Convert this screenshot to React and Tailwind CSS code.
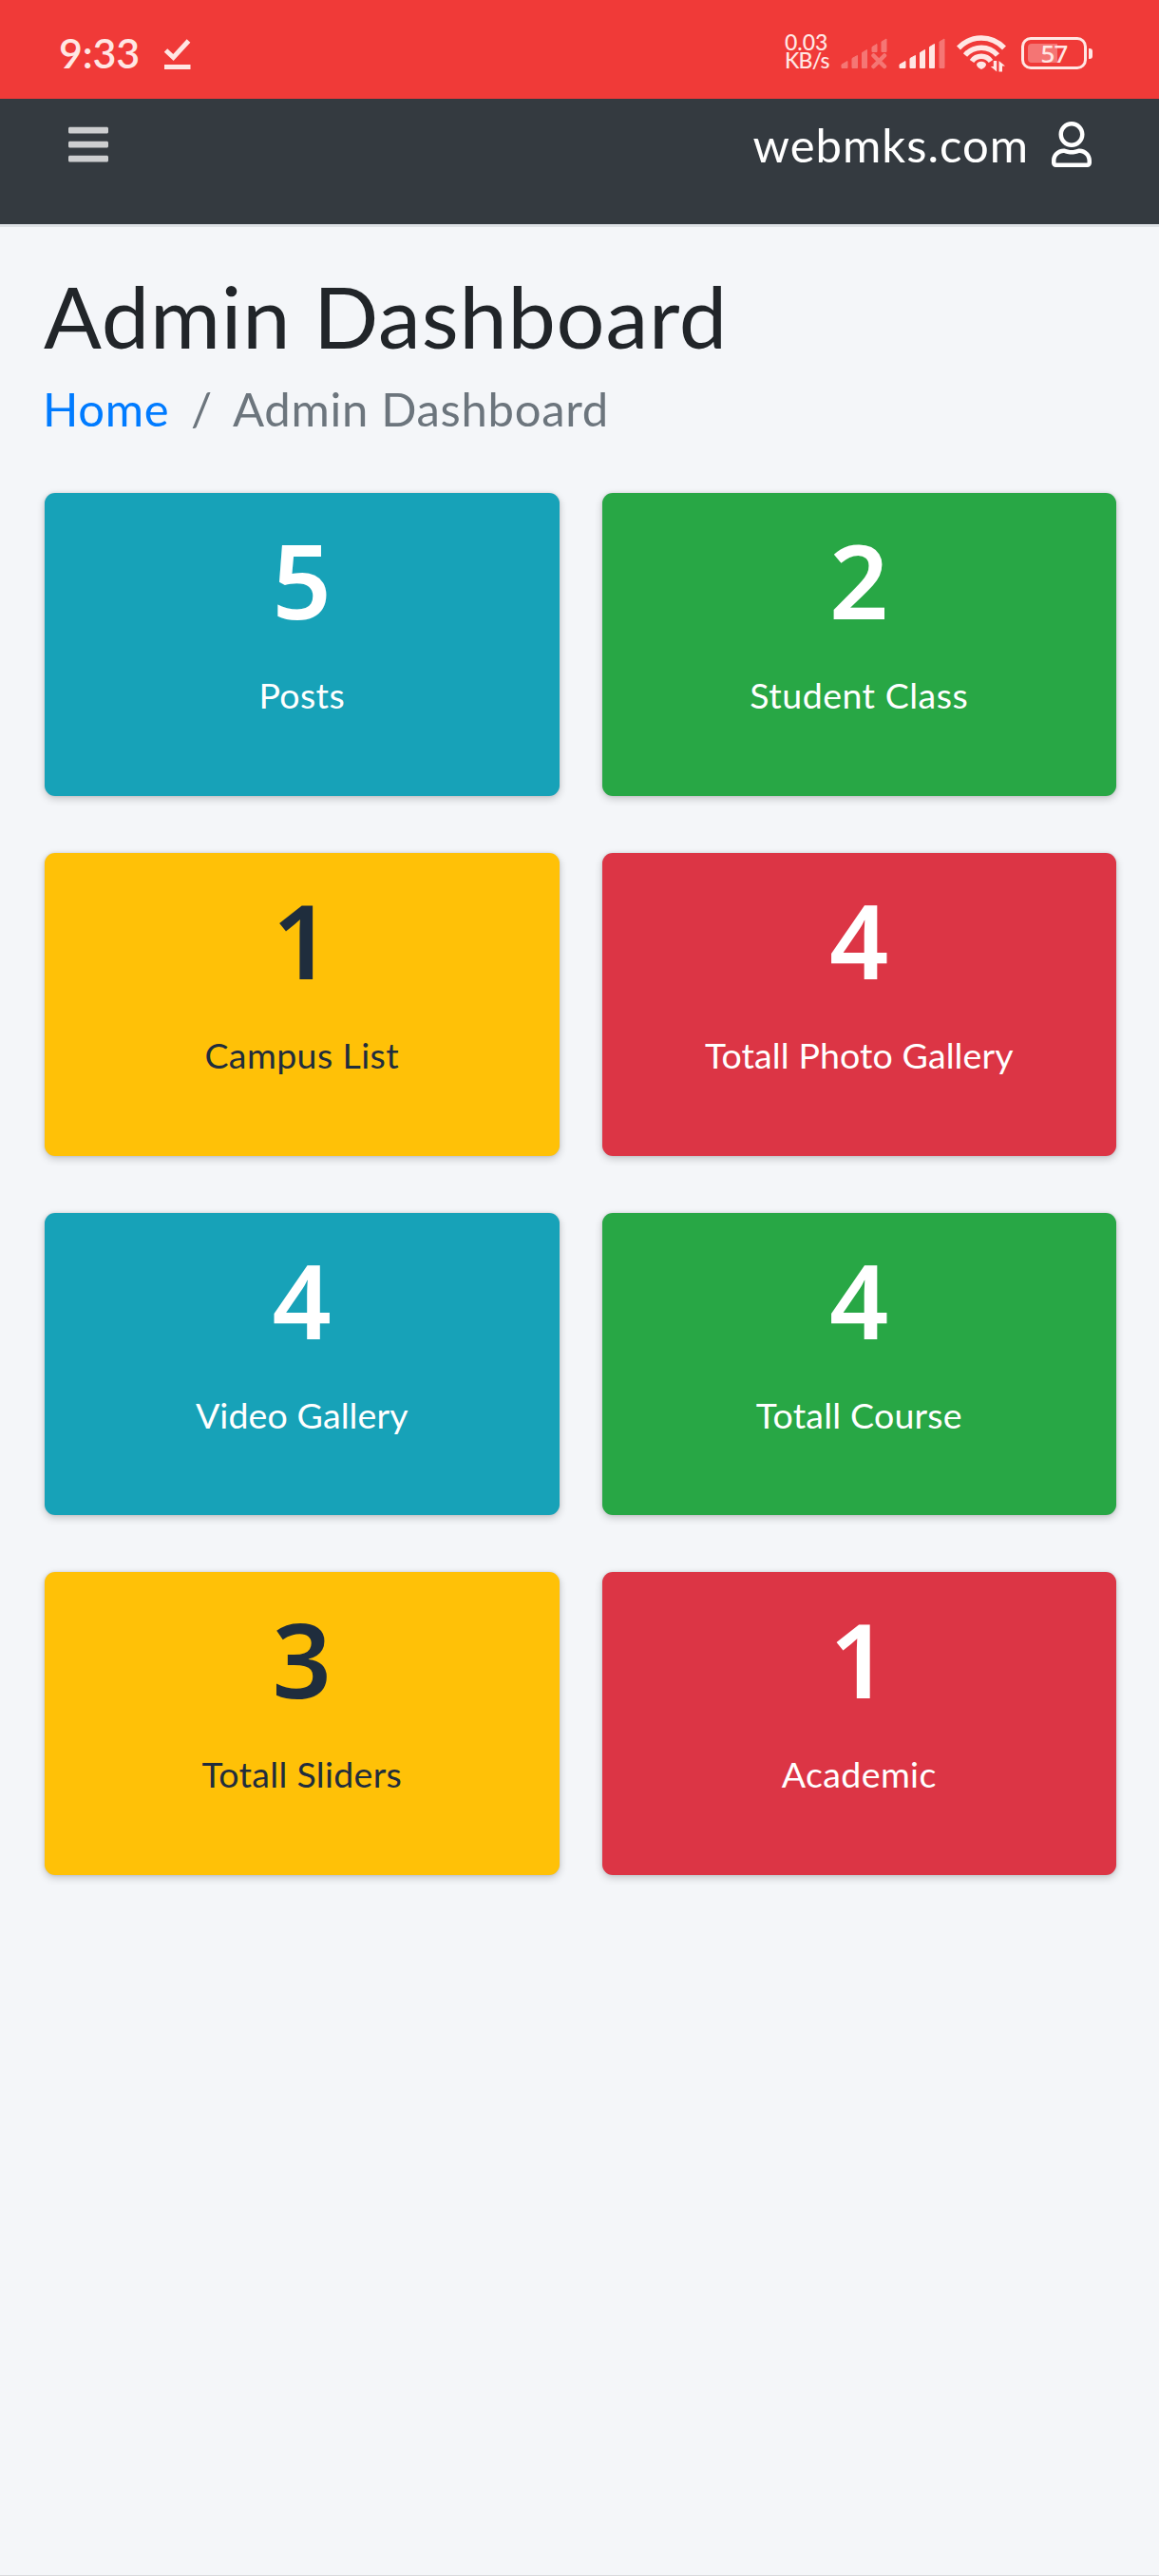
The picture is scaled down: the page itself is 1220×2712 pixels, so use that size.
import { FaBars, FaRegUser } from "react-icons/fa";

const cards = [
  { count: 5, label: "Posts", color: "bg-[#17a2b8] text-white", tracking: "tracking-[0.4px]" },
  { count: 2, label: "Student Class", color: "bg-[#28a745] text-white", tracking: "tracking-[0.5px]" },
  { count: 1, label: "Campus List", color: "bg-[#ffc107] text-[#1f2d3d]", tracking: "tracking-[0.4px]" },
  { count: 4, label: "Totall Photo Gallery", color: "bg-[#dc3545] text-white", tracking: "tracking-[0.1px]" },
  { count: 4, label: "Video Gallery", color: "bg-[#17a2b8] text-white", tracking: "tracking-[0.1px]" },
  { count: 4, label: "Totall Course", color: "bg-[#28a745] text-white", tracking: "tracking-[0.2px]" },
  { count: 3, label: "Totall Sliders", color: "bg-[#ffc107] text-[#1f2d3d]", tracking: "tracking-[0.3px]" },
  { count: 1, label: "Academic", color: "bg-[#dc3545] text-white", tracking: "tracking-[0.4px]" },
];

function DownloadDoneIcon() {
  return (
    <svg width="30" height="34" viewBox="0 0 30 34" fill="none" stroke="currentColor" strokeWidth="5">
      <path d="M2.5 14 L10.5 21.5 L26.5 4" />
      <path d="M1 31.5H28.5" />
    </svg>
  );
}

function NoSignalIcon() {
  return (
    <svg width="50" height="34" viewBox="0 0 50 34" fill="currentColor" stroke="currentColor" strokeWidth="1" strokeLinejoin="round" opacity="0.35">
      <path d="M1 29l6-3.5v7H1z" />
      <path d="M12 22.5l5.5-3v13H12z" />
      <path d="M22.5 16.5l5-3v19h-5z" />
      <path d="M33 10.5l5-3v8h-5z" />
      <path d="M43 5l5-3v13.5h-5z" />
      <path d="M34.5 19.5l11.5 11.5M46 19.5L34.5 31" strokeWidth="4.5" strokeLinecap="round" />
    </svg>
  );
}

function SignalIcon() {
  return (
    <svg width="50" height="34" viewBox="0 0 50 34" fill="currentColor" stroke="currentColor" strokeWidth="1" strokeLinejoin="round">
      <path d="M1 29l6-3.5v7H1z" />
      <path d="M12 22.5l5.5-3v13H12z" />
      <path d="M22.5 16.5l5-3v19h-5z" />
      <path d="M32.5 10.5l5-3v25h-5z" />
      <path d="M43 5l5-3v30.5h-5z" opacity="0.35" />
    </svg>
  );
}

function WifiIcon() {
  return (
    <svg width="52" height="40" viewBox="0 0 52 40" fill="none" stroke="currentColor" strokeWidth="5.5">
      <path d="M2 14.5C15.5 0.5 36.5 0.5 50 14.5" />
      <path d="M9 22C18 11.5 34 11.5 43 22" />
      <path d="M16 28.5C21 21.5 31 21.5 36 28.5" />
      <path d="M26 28.8c2.8 0 5 1.5 5 3.2 0 2-3.5 4.8-5 4.8s-5-2.8-5-4.8c0-1.7 2.2-3.2 5-3.2z" fill="currentColor" stroke="none" />
      <path d="M42.2 28v11.5l-6.4-5.5h3v-6zM44.5 39.5V28l6.5 5.5h-3v6z" fill="currentColor" stroke="none" />
    </svg>
  );
}

function Battery({ level }) {
  return (
    <div className="flex items-center gap-[2px]">
      <div className="relative h-[34px] w-[69px] rounded-[10px] border-[3.5px] border-current">
        <div className="absolute top-1 bottom-1 left-1 w-[31px] rounded-l-[4px] bg-white/30" />
        <span className="absolute inset-0 flex items-center justify-center font-['Noto_Sans',sans-serif] text-[26px] leading-none font-medium tracking-[-0.8px]">{level}</span>
      </div>
      <div className="h-[11px] w-[4px] rounded-r-[3px] bg-current" />
    </div>
  );
}

function StatusBar() {
  return (
    <div className="flex h-[104px] items-start justify-between bg-[#f03a38] pr-[70px] pl-[62px] text-[#ffe7e4]">
      <div className="flex items-start pt-[35px]">
        <span className="w-[110px] text-[43px] leading-[42px] font-semibold tracking-[-0.2px]">9:33</span>
        <div className="pt-[4px]">
          <DownloadDoneIcon />
        </div>
      </div>
      <div className="flex items-start pt-[36px]">
        <div className="-mt-px w-[59px] text-[23px] leading-[19px] font-medium">
          <p>0.03</p>
          <p className="tracking-[-0.8px]">KB/s</p>
        </div>
        <div className="pt-[3px]">
          <NoSignalIcon />
        </div>
        <div className="pt-[3px] pl-[11px]">
          <SignalIcon />
        </div>
        <div className="pl-[11px]">
          <WifiIcon />
        </div>
        <div className="pt-[3px] pl-[16px]">
          <Battery level={57} />
        </div>
      </div>
    </div>
  );
}

function Navbar() {
  return (
    <nav className="flex h-[135px] items-start justify-between border-b-[3px] border-[#dee2e6] bg-[#343a40] pt-[24px] pr-[71px] pl-[72px]">
      <FaBars className="h-[48px] w-[42px] text-[#cdced0]" />
      <div className="flex items-center text-white">
        <span className="mr-[24px] text-[49px] leading-[48px] tracking-[1px]">webmks.com</span>
        <FaRegUser className="h-[48px] w-[42px]" />
      </div>
    </nav>
  );
}

function StatCard({ count, label, color, tracking }) {
  return (
    <div className={`flex h-[318.8px] flex-col items-center rounded-[11px] pt-[36px] shadow-[0_3px_8px_rgba(0,0,0,0.2),0_0_3px_rgba(0,0,0,0.125)] ${color}`}>
      <h3 className="font-['Noto_Sans',sans-serif] text-[109px] leading-[110px] font-semibold">{count}</h3>
      <p className={`mt-[47px] text-[37.5px] leading-[40px] ${tracking}`}>{label}</p>
    </div>
  );
}

export default function App() {
  return (
    <div className="flex h-[2712px] w-[1220px] flex-col border-b border-[#d9dadd] bg-[#f4f6f9] font-[Lato,sans-serif]">
      <StatusBar />
      <Navbar />
      <main className="px-[46px] pt-[48px]">
        <h1 className="text-[90px] leading-[90px] tracking-[0.8px] text-[#212529]">Admin Dashboard</h1>
        <ol className="mt-[23px] -ml-px flex text-[49px] leading-[60px] tracking-[0.7px] text-[#6c757d]">
          <li className="w-[156px] text-[#007bff]">Home</li>
          <li className="w-[44px]">/</li>
          <li>Admin Dashboard</li>
        </ol>
        <div className="mt-[59px] mr-[-1px] ml-[1px] grid grid-cols-2 gap-x-[45px] gap-y-[60px]">
          {cards.map((card) => (
            <StatCard key={card.label} {...card} />
          ))}
        </div>
      </main>
    </div>
  );
}
